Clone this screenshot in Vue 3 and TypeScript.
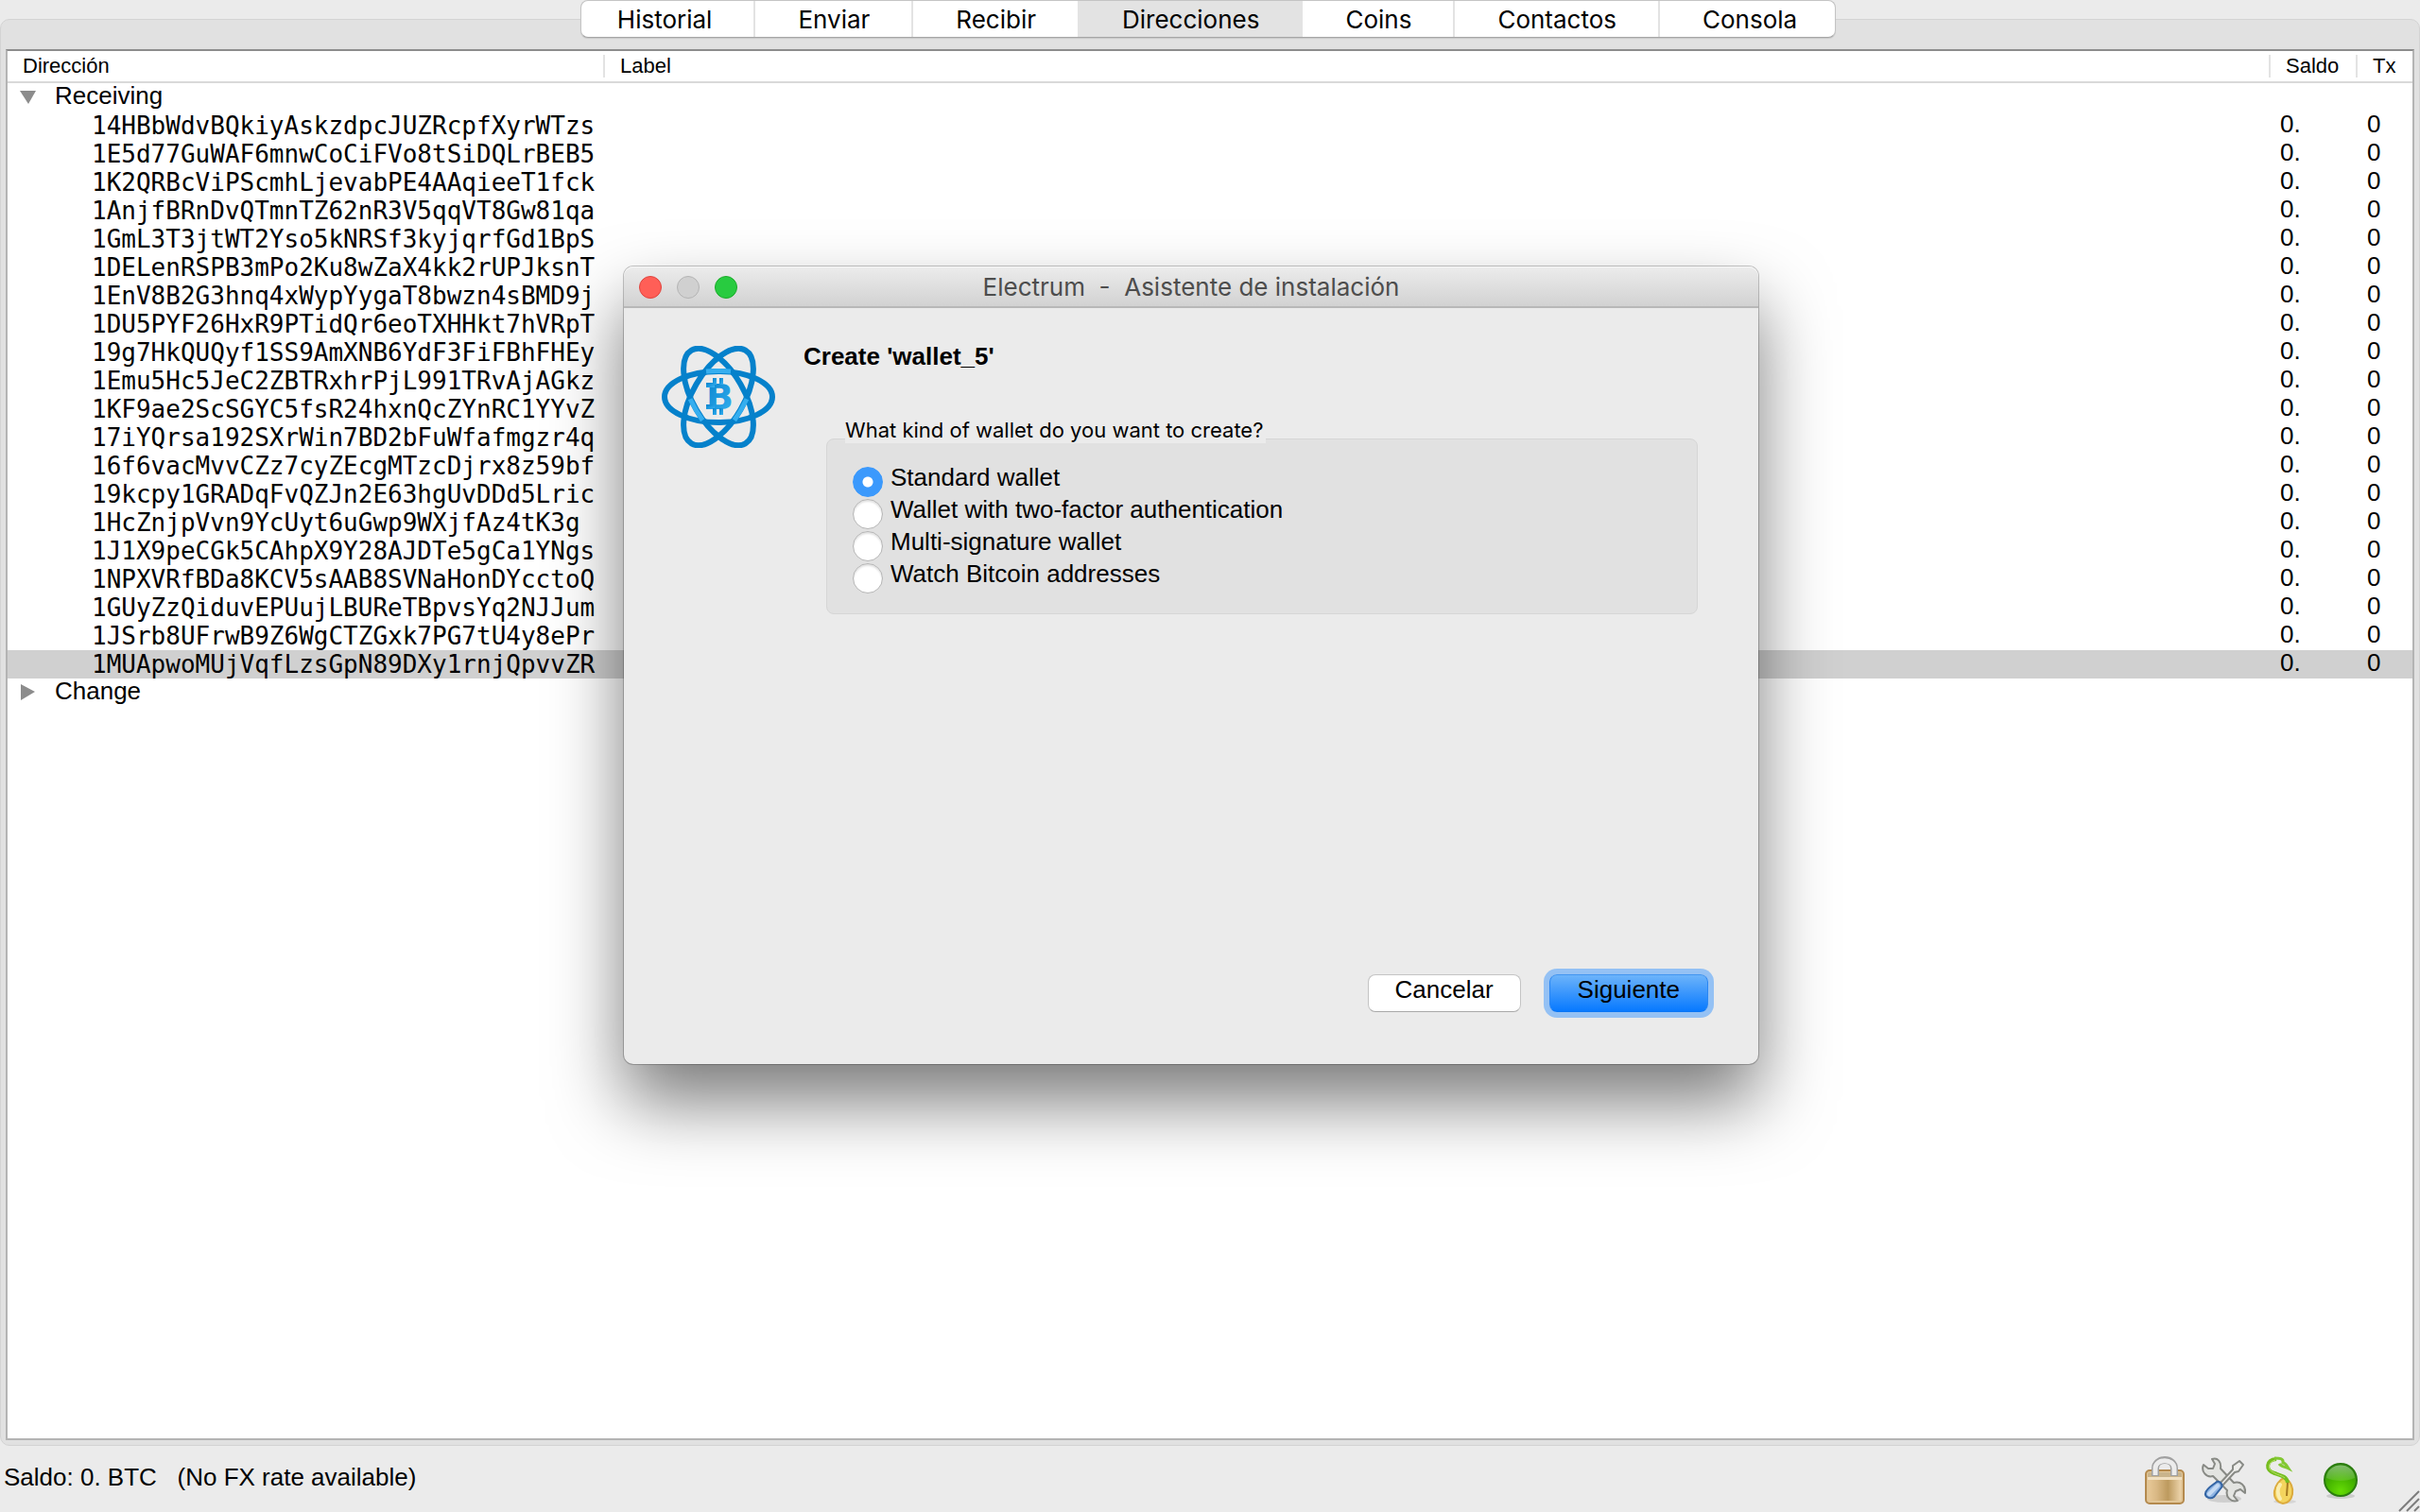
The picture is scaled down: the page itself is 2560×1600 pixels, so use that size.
<script setup lang="ts">
import { ref } from 'vue'

interface AddressRow {
  address: string
  label: string
  balance: string
  txCount: number
}

const tabs: string[] = ['Historial', 'Enviar', 'Recibir', 'Direcciones', 'Coins', 'Contactos', 'Consola']
const activeTab = ref('Direcciones')

const receiving: AddressRow[] = [
  '14HBbWdvBQkiyAskzdpcJUZRcpfXyrWTzs',
  '1E5d77GuWAF6mnwCoCiFVo8tSiDQLrBEB5',
  '1K2QRBcViPScmhLjevabPE4AAqieeT1fck',
  '1AnjfBRnDvQTmnTZ62nR3V5qqVT8Gw81qa',
  '1GmL3T3jtWT2Yso5kNRSf3kyjqrfGd1BpS',
  '1DELenRSPB3mPo2Ku8wZaX4kk2rUPJksnT',
  '1EnV8B2G3hnq4xWypYygaT8bwzn4sBMD9j',
  '1DU5PYF26HxR9PTidQr6eoTXHHkt7hVRpT',
  '19g7HkQUQyf1SS9AmXNB6YdF3FiFBhFHEy',
  '1Emu5Hc5JeC2ZBTRxhrPjL991TRvAjAGkz',
  '1KF9ae2ScSGYC5fsR24hxnQcZYnRC1YYvZ',
  '17iYQrsa192SXrWin7BD2bFuWfafmgzr4q',
  '16f6vacMvvCZz7cyZEcgMTzcDjrx8z59bf',
  '19kcpy1GRADqFvQZJn2E63hgUvDDd5Lric',
  '1HcZnjpVvn9YcUyt6uGwp9WXjfAz4tK3g',
  '1J1X9peCGk5CAhpX9Y28AJDTe5gCa1YNgs',
  '1NPXVRfBDa8KCV5sAAB8SVNaHonDYcctoQ',
  '1GUyZzQiduvEPUujLBUReTBpvsYq2NJJum',
  '1JSrb8UFrwB9Z6WgCTZGxk7PG7tU4y8ePr',
  '1MUApwoMUjVqfLzsGpN89DXy1rnjQpvvZR',
].map((address) => ({ address, label: '', balance: '0.', txCount: 0 }))

const selected = ref('1MUApwoMUjVqfLzsGpN89DXy1rnjQpvvZR')
const receivingOpen = ref(true)

const walletKinds = [
  { id: 'standard', text: 'Standard wallet' },
  { id: '2fa', text: 'Wallet with two-factor authentication' },
  { id: 'multisig', text: 'Multi-signature wallet' },
  { id: 'imported', text: 'Watch Bitcoin addresses' },
]
const kind = ref('standard')

const dialogTitle = 'Electrum  -  Asistente de instalación'
const balanceText = 'Saldo: 0. BTC   (No FX rate available)'
</script>

<template>
  <div class="app">
    <nav class="tabs" aria-label="Secciones">
      <div class="tab-bar">
        <button
          v-for="tab in tabs"
          :key="tab"
          type="button"
          class="tab"
          :class="{ active: tab === activeTab }"
          @click="activeTab = tab"
        >{{ tab }}</button>
      </div>
    </nav>

    <main class="panel">
      <div class="tree">
        <table>
          <colgroup>
            <col class="col-address" />
            <col />
            <col class="col-balance" />
            <col class="col-tx" />
          </colgroup>
          <thead>
            <tr>
              <th scope="col"><div class="head">Dirección</div></th>
              <th scope="col"><div class="head">Label</div></th>
              <th scope="col"><div class="head">Saldo</div></th>
              <th scope="col"><div class="head last">Tx</div></th>
            </tr>
          </thead>
          <tbody>
            <tr>
              <td colspan="4">
                <div class="group">
                  <button type="button" class="toggle" aria-label="Receiving" @click="receivingOpen = !receivingOpen">
                    <svg width="20" height="24" viewBox="0 0 20 24"><path d="M1 8H18L10 22Z" fill="#8c8c8c" /></svg>
                  </button>
                  <span>Receiving</span>
                </div>
              </td>
            </tr>
            <template v-if="receivingOpen">
              <tr
                v-for="row in receiving"
                :key="row.address"
                :class="{ selected: row.address === selected }"
                @click="selected = row.address"
              >
                <td class="address">{{ row.address }}</td>
                <td>{{ row.label }}</td>
                <td class="number">{{ row.balance }}</td>
                <td class="number">{{ row.txCount }}</td>
              </tr>
            </template>
            <tr>
              <td colspan="4">
                <div class="group">
                  <button type="button" class="toggle" aria-label="Change">
                    <svg width="20" height="24" viewBox="0 0 20 24"><path d="M2 6V23L17 14Z" fill="#8c8c8c" /></svg>
                  </button>
                  <span>Change</span>
                </div>
              </td>
            </tr>
          </tbody>
        </table>
      </div>
    </main>

    <footer class="status">
      <span class="balance">{{ balanceText }}</span>
      <div class="status-icons">
        <button type="button" class="status-button" aria-label="Contraseña">
          <svg width="48" height="52" viewBox="0 0 48 52">
            <defs>
              <linearGradient id="lockBody" x1="0" x2="1">
                <stop offset="0" stop-color="#e6c796" /><stop offset=".25" stop-color="#d9b884" />
                <stop offset=".6" stop-color="#bd9a5e" /><stop offset="1" stop-color="#ecd3aa" />
              </linearGradient>
            </defs>
            <rect x="4" y="15" width="40" height="35" rx="4" fill="#e2c697" stroke="#b48a4e" stroke-width="2" />
            <rect x="6" y="17" width="36" height="7" rx="2" fill="#c9b48c" />
            <rect x="7" y="25" width="34" height="22" fill="url(#lockBody)" />
            <path d="M14 21V13C14 1 34 1 34 13V21" fill="none" stroke="#a0a0a0" stroke-width="8" />
            <path d="M14 20V13C14 2 34 2 34 13V20" fill="none" stroke="#ececec" stroke-width="5" />
            <rect x="6" y="22" width="36" height="3" fill="#f0e0c2" />
          </svg>
        </button>
        <button type="button" class="status-button" aria-label="Preferencias">
          <svg width="48" height="52" viewBox="0 0 48 52">
            <ellipse cx="25" cy="45" rx="18" ry="4" fill="#cfcfcf" />
            <path d="M12 3L15 8L13 13L8 13L3 9C0 16 6 23 13 21L28 36C26 43 32 49 39 47L35 42L37 37L42 35L47 39C48 31 42 26 35 28L21 13C22 6 18 1 12 3Z" fill="#e3e4e1" stroke="#888a85" stroke-width="2" stroke-linejoin="round" />
            <path d="M20 29L34 14L34 10L41 5L45 9L40 16L36 17L23 31Z" fill="#eeeeec" stroke="#888a85" stroke-width="2" stroke-linejoin="round" />
            <path d="M17 27C20 26 24 30 22 33L14 43C10 46 4 43 5 39C6 34 12 31 17 27Z" fill="#8fb4e3" stroke="#3465a4" stroke-width="2" />
            <path d="M18 31L9 40" stroke="#c5daf3" stroke-width="4" stroke-linecap="round" />
          </svg>
        </button>
        <button type="button" class="status-button" aria-label="Semilla">
          <svg width="48" height="52" viewBox="0 0 48 52">
            <ellipse cx="27" cy="48" rx="12" ry="2" fill="#d6d6d6" />
            <path d="M26 23C34 26 36 34 35 40C34 46 30 50 25 50C19 49 15 44 16 37C17 31 21 25 26 23Z" fill="#f4d45e" stroke="#dcab3e" stroke-width="2" />
            <path d="M22 30C19 34 19 40 22 45" fill="none" stroke="#fbeeb0" stroke-width="4" stroke-linecap="round" />
            <path d="M30 27L29 42" stroke="#a57a20" stroke-width="2" />
            <path d="M30 28C29 21 22 20 16 18C6 15 7 4 18 3" fill="none" stroke="#76bd20" stroke-width="4" />
            <path d="M16 2C21 2 26 2 25 7C28 7 29 10 31 13C27 11 23 11 21 8" fill="none" stroke="#82c832" stroke-width="3" />
            <path d="M27 23C24 20 19 20 15 17C8 14 9 6 17 4" fill="none" stroke="#b4e065" stroke-width="1" />
          </svg>
        </button>
        <button type="button" class="status-button" aria-label="Red">
          <svg width="48" height="52" viewBox="0 0 48 52">
            <defs>
              <radialGradient id="netLed" cx=".5" cy=".85" r=".8">
                <stop offset="0" stop-color="#66dc05" /><stop offset=".5" stop-color="#48b800" /><stop offset="1" stop-color="#2f8f0c" />
              </radialGradient>
              <linearGradient id="netShine" x1="0" x2="0" y1="0" y2="1">
                <stop offset="0" stop-color="#fff" stop-opacity=".4" /><stop offset="1" stop-color="#fff" stop-opacity=".1" />
              </linearGradient>
            </defs>
            <ellipse cx="24" cy="42" rx="15" ry="3" fill="#cccccc" />
            <circle cx="24" cy="25" r="17" fill="url(#netLed)" stroke="#2c7d10" stroke-width="2" />
            <path d="M9 23C10 5 38 5 39 23C30 27 18 27 9 23Z" fill="url(#netShine)" />
          </svg>
        </button>
      </div>
      <svg class="grip" width="24" height="24" viewBox="0 0 24 24">
        <path d="M2 23L23 2M10 23L23 10M18 23L23 18" stroke="#7d7d7d" stroke-width="2" />
      </svg>
    </footer>

    <section class="dialog" role="dialog" aria-labelledby="dialog-title">
      <header class="titlebar">
        <div class="lights">
          <button type="button" class="light red" aria-label="Cerrar"></button>
          <button type="button" class="light grey" aria-label="Minimizar"></button>
          <button type="button" class="light green" aria-label="Ampliar"></button>
        </div>
        <span id="dialog-title" class="title">{{ dialogTitle }}</span>
      </header>
      <div class="dialog-body">
        <svg class="logo" width="120" height="108" viewBox="0 0 120 108">
          <defs>
            <linearGradient id="coin" x1="0" x2="1" y1="0" y2="1">
              <stop offset="0" stop-color="#0582cc" /><stop offset="1" stop-color="#38b2f2" />
            </linearGradient>
          </defs>
          <g fill="none" stroke="#0581cb" stroke-width="6">
            <ellipse cx="60" cy="54" rx="57" ry="27" />
            <ellipse cx="60" cy="54" rx="57" ry="27" transform="rotate(60 60 54)" />
            <ellipse cx="60" cy="54" rx="57" ry="27" transform="rotate(-60 60 54)" />
          </g>
          <g fill="none" stroke="#35aeef" stroke-width="5">
            <path d="M47 27Q60 26 73 27" />
            <path d="M47 27Q60 26 73 27" transform="rotate(120 60 54)" />
            <path d="M47 27Q60 26 73 27" transform="rotate(240 60 54)" />
          </g>
          <g fill="url(#coin)">
            <text class="coin-letter" x="47" y="67">B</text>
            <rect x="47" y="39" width="9" height="5" />
            <rect x="47" y="62" width="9" height="5" />
            <rect x="54" y="34" width="4" height="7" />
            <rect x="61" y="34" width="4" height="7" />
            <rect x="54" y="66" width="4" height="7" />
            <rect x="61" y="66" width="4" height="7" />
          </g>
        </svg>
        <form class="wizard" @submit.prevent>
          <h1>Create 'wallet_5'</h1>
          <fieldset>
            <legend>What kind of wallet do you want to create?</legend>
            <div class="options">
              <label v-for="option in walletKinds" :key="option.id" class="option">
                <input v-model="kind" type="radio" name="kind" :value="option.id" />
                <span>{{ option.text }}</span>
              </label>
            </div>
          </fieldset>
          <div class="actions">
            <button type="button" class="action">Cancelar</button>
            <button type="submit" class="action primary">Siguiente</button>
          </div>
        </form>
      </div>
    </section>
  </div>
</template>

<style>
body {
  margin: 0;
}
</style>

<style scoped>
.app {
  position: relative;
  display: flex;
  flex-direction: column;
  min-height: 100vh;
  overflow: hidden;
  background: #ebebeb;
  color: #000;
  font-family: "Liberation Sans", Arial, sans-serif;
  font-size: 26px;
}

button {
  margin: 0;
  padding: 0;
  border: 0;
  background: none;
  color: inherit;
  font: inherit;
}

/* Tabs straddle the top edge of the panel */
.tabs {
  position: relative;
  z-index: 1;
  display: flex;
  justify-content: center;
  padding-right: 4px;
}

.tab-bar {
  display: flex;
  height: 38px;
  border: 1px solid #c4c4c4;
  border-bottom-color: #a6a6a6;
  border-radius: 8px;
  background: #fff;
  box-shadow: 0 1px 1px rgba(0, 0, 0, 0.12);
  overflow: hidden;
}

.tab {
  padding: 0 44px 0 45px;
  border-right: 2px solid #e3e3e3;
  font-family: Inter, Roboto, sans-serif;
  font-size: 26px;
  line-height: 40px;
}

.tab:first-child {
  padding-left: 38px;
}

.tab:last-child {
  padding-right: 40px;
  border-right: 0;
}

.tab.active {
  background: #e3e3e3;
}

.panel {
  flex: 1;
  display: flex;
  margin-top: -20px;
  padding: 31px 5px 5px;
  border: 1px solid #d3d3d3;
  border-radius: 10px;
  background: #e1e1e1;
}

.tree {
  flex: 1;
  border: 2px solid #b4b4b4;
  border-top-color: #8c8c8c;
  background: #fff;
}

table {
  width: 100%;
  border-collapse: collapse;
  table-layout: fixed;
}

.col-address {
  width: 632px;
}

.col-balance {
  width: 92px;
}

.col-tx {
  width: 58px;
}

th {
  padding: 3px 0 5px;
  font-size: 22px;
  font-weight: normal;
  line-height: 24px;
  text-align: left;
}

thead {
  box-shadow: inset 0 -2px #d9d9d9;
}

thead tr {
  height: 34px;
}

.head {
  padding-left: 16px;
  border-right: 2px solid #e3e3e3;
}

.head.last {
  border-right: 0;
}

td {
  height: 30px;
  padding: 0;
  line-height: 26px;
  vertical-align: top;
}

.address {
  padding-left: 89px;
  font-family: "DejaVu Sans Mono", "Liberation Mono", monospace;
  line-height: 30px;
}

.number {
  padding-left: 10px;
}

.selected {
  background: #d0d0d0;
}

.group {
  display: flex;
  gap: 18px;
  padding-left: 12px;
}

.toggle,
.toggle svg {
  display: block;
  width: 20px;
  height: 24px;
}

.status {
  position: relative;
  display: flex;
  align-items: center;
  justify-content: space-between;
  height: 70px;
  padding: 0 60px 0 4px;
}

.balance {
  padding-bottom: 4px;
  white-space: pre;
}

.status-icons {
  display: flex;
  gap: 14px;
  padding-top: 4px;
}

.status-button,
.status-button svg {
  display: block;
}

.grip {
  position: absolute;
  right: 0;
  bottom: 0;
}

/* Wizard window floating over the main one */
.dialog {
  position: absolute;
  top: 282px;
  left: 660px;
  display: flex;
  flex-direction: column;
  width: 1200px;
  min-height: 844px;
  border-radius: 10px;
  background: #ebebeb;
  box-shadow: 0 0 0 1px rgba(0, 0, 0, 0.22), 0 40px 76px rgba(0, 0, 0, 0.52);
}

.titlebar {
  position: relative;
  display: flex;
  align-items: center;
  justify-content: center;
  height: 40px;
  padding-top: 2px;
  border-bottom: 2px solid #b8b8b8;
  border-radius: 10px 10px 0 0;
  background: linear-gradient(#ececec, #d2d2d2);
  box-shadow: inset 0 1px #f7f7f7;
}

.lights {
  position: absolute;
  top: 10px;
  left: 16px;
  display: flex;
  gap: 16px;
}

.light {
  width: 24px;
  height: 24px;
  border: 1px solid #e0443e;
  border-radius: 50%;
  background: #ff5f57;
}

.light.grey {
  border-color: #b4b4b4;
  background: #d0d0d0;
}

.light.green {
  border-color: #1aab29;
  background: #28cb40;
}

.title {
  color: #4d4d4d;
  font-family: Inter, Roboto, sans-serif;
  font-size: 26px;
  line-height: 32px;
  white-space: pre;
}

.dialog-body {
  flex: 1;
  display: flex;
  gap: 30px;
  padding: 37px 53px 55px 40px;
}

.logo {
  flex: none;
  margin-top: 3px;
}

.coin-letter {
  font-family: "DejaVu Sans", sans-serif;
  font-size: 38px;
  font-weight: bold;
}

.wizard {
  flex: 1;
  display: flex;
  flex-direction: column;
}

h1 {
  margin: 0 0 50px;
  font-size: 26px;
  line-height: 28px;
}

fieldset {
  margin: 0 11px 0 24px;
  padding: 0;
  border: 0;
}

legend {
  position: relative;
  margin-left: 20px;
  padding: 0 3px 0 0;
  background: #ebebeb;
  font-family: Inter, Roboto, sans-serif;
  font-size: 22px;
  line-height: 28px;
}

.options {
  margin-top: -5px;
  padding: 29px 27px 19px;
  border: 1px solid #d6d6d6;
  border-radius: 8px;
  background: #e1e1e1;
}

.option {
  display: flex;
  gap: 8px;
  height: 34px;
  line-height: 22px;
}

input[type="radio"] {
  appearance: none;
  width: 32px;
  height: 32px;
  margin: 0;
  border: 1px solid #b5b5b5;
  border-radius: 50%;
  background: #fff;
  box-shadow: inset 0 2px 2px rgba(0, 0, 0, 0.12);
}

input[type="radio"]:checked {
  border-color: #3b99fc;
  background: radial-gradient(circle, #fff 5px, #3b99fc 6px);
  box-shadow: none;
}

.actions {
  display: flex;
  justify-content: flex-end;
  gap: 30px;
  margin-top: auto;
}

.action {
  height: 40px;
  padding: 0 28px 8px;
  border: 1px solid #c4c4c4;
  border-bottom-color: #a9a9a9;
  border-radius: 8px;
  background: #fff;
  line-height: 30px;
}

.primary {
  padding: 0 29px 8px;
  border-color: #4295f0 #2a86f2 #0a76f5;
  background: linear-gradient(#6cb3fa, #0779ff);
  box-shadow: 0 0 0 6px #94c1f4;
}
</style>
